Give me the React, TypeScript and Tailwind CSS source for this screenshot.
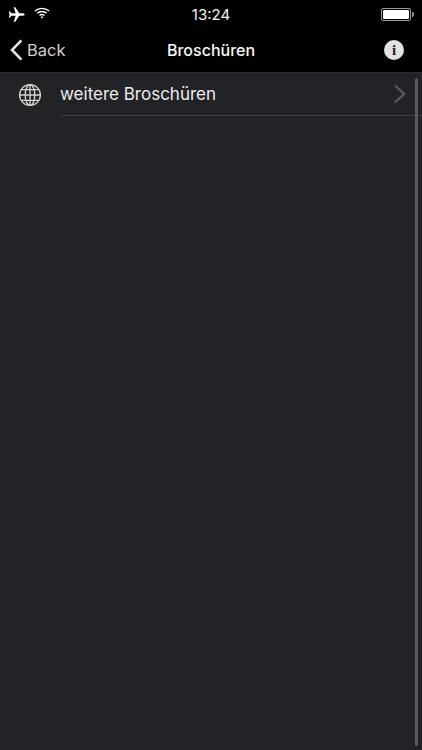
import React from "react";

function Plane() {
  return (
    <svg width="17" height="15" viewBox="0 0 17 15" fill="#fff">
      <path d="M16.6 7.5c0-.8-1-1.2-1.9-1.2h-3.5L7.3.3H5.7l2 6H3.4L2 4.6H.8l.8 2.9-.8 2.9H2l1.4-1.7h4.3l-2 6h1.6l3.9-6h3.5c.9 0 1.9-.4 1.9-1.2z" />
    </svg>
  );
}

function Wifi() {
  return (
    <svg width="16" height="12" viewBox="0 0 16 12" fill="none" stroke="#fff" strokeWidth="1.3">
      <path d="M.9 4C4.9.4 11.1.4 15.1 4" />
      <path d="M3.2 6.3c2.7-2.4 6.9-2.4 9.6 0" />
      <path d="M5.5 8.6c1.4-1.2 3.6-1.2 5 0" />
      <path d="M8 11.6 6.6 10c.8-.6 2-.6 2.8 0z" fill="#fff" stroke="none" />
    </svg>
  );
}

function Globe() {
  return (
    <svg width="24" height="24" viewBox="0 0 24 24" fill="none" stroke="#d4d4d4" strokeWidth="1.3">
      <circle cx="12" cy="12" r="10.4" />
      <ellipse cx="12" cy="12" rx="4.8" ry="10.4" />
      <path d="M12 1.6v20.8M1.6 12h20.8M3.2 6.6h17.6M3.2 17.4h17.6" />
    </svg>
  );
}

export default function App() {
  return (
    <div className="relative flex h-[750px] w-[422px] flex-col overflow-hidden bg-[#222326] font-['Inter','Liberation_Sans',sans-serif]">
      <header className="h-[72px] shrink-0 bg-black text-white">
        <div className="grid h-[28px] grid-cols-3 items-center px-[8px]">
          <div className="flex items-center gap-[9px]">
            <Plane />
            <div className="mb-[2px]">
              <Wifi />
            </div>
          </div>
          <div className="text-center text-[15px] leading-none text-[#f2f2f2]">13:24</div>
          <div className="flex items-center justify-end">
            <div className="h-[13px] w-[30px] rounded-[2px] border border-[#9a9a9a] p-[1px]">
              <div className="h-full w-full rounded-[1px] bg-white" />
            </div>
            <div className="ml-[1px] h-[5px] w-[2px] rounded-r-sm bg-[#9a9a9a]" />
          </div>
        </div>
        <div className="grid h-[44px] grid-cols-[1fr_auto_1fr] items-center px-[10px]">
          <div className="flex items-center gap-[4px]">
            <svg width="13" height="22" viewBox="0 0 13 22" fill="none" stroke="#e4e4e4" strokeWidth="2.6">
              <path d="M11.4 1.4 2 11l9.4 9.6" />
            </svg>
            <span className="text-[16.5px] leading-none text-[#d0d0d0]">Back</span>
          </div>
          <div className="text-[16px] font-medium leading-none text-[#f8f8f8]">Broschüren</div>
          <div className="flex justify-end pr-[8px]">
            <div className="flex h-[20px] w-[20px] items-center justify-center rounded-full bg-[#e2e2e2] font-['Liberation_Serif',serif] text-[15px] font-bold leading-none text-[#222326]">
              i
            </div>
          </div>
        </div>
      </header>

      <main className="flex-1 border-t border-[#2b2c2f]">
        <div className="flex h-[43px] items-center">
          <div className="flex w-[60px] shrink-0 justify-center">
            <Globe />
          </div>
          <div className="flex h-full flex-1 items-center justify-between border-b border-[#3c3d40] pr-[16px]">
            <span className="text-[17px] leading-none text-[#ececec]">weitere Broschüren</span>
            <svg width="13" height="20" viewBox="0 0 13 20" fill="none" stroke="#57585b" strokeWidth="2.4">
              <path d="m2 1.5 9 8.5-9 8.5" />
            </svg>
          </div>
        </div>
      </main>

      <div className="absolute bottom-[4px] right-[4px] top-[78px] w-[3px] rounded-full bg-[#58595c]" />
    </div>
  );
}
